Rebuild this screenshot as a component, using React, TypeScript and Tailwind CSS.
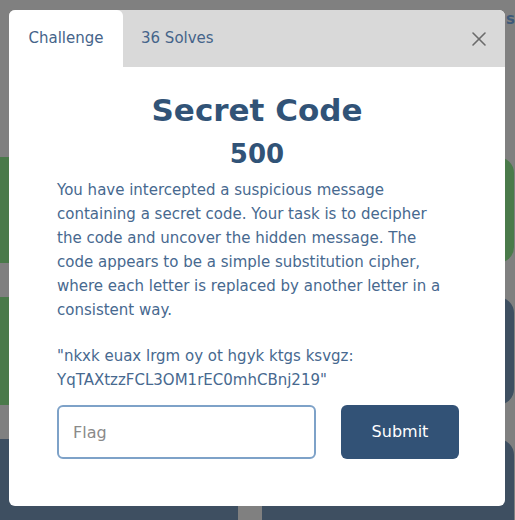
import { X } from 'lucide-react';

const FONT = { fontFamily: '"DejaVu Sans", "Open Sans", sans-serif' };

export default function App() {
  return (
    <div className="relative w-[515px] h-[520px] overflow-hidden bg-[#808080]" style={FONT}>
      {/* dimmed page behind the dialog */}
      <div className="flex flex-col gap-[34px] pt-[157px]">
        <div className="flex gap-[24px] -ml-[14px]">
          <div className="h-[106px] w-[252px] rounded-[16px] bg-[#4a7a4a]" />
          <div className="h-[106px] w-[252px] rounded-[16px] bg-[#4a7a4a]" />
        </div>
        <div className="flex gap-[24px] -ml-[14px]">
          <div className="h-[108px] w-[252px] rounded-[16px] bg-[#4a7a4a]" />
          <div className="h-[108px] w-[252px] rounded-[16px] bg-[#3e4f61]" />
        </div>
        <div className="flex gap-[24px] -ml-[14px]">
          <div className="flex h-[106px] w-[252px] items-end justify-center rounded-[16px] bg-[#3e4f61] text-[15px] leading-[18px] text-[#8a8f96]">
            <span className="-mb-[4px]">500</span>
          </div>
          <div className="flex h-[106px] w-[252px] items-end justify-center rounded-[16px] bg-[#3e4f61] text-[15px] leading-[18px] text-[#8a8f96]">
            <span className="-mb-[4px]">500</span>
          </div>
        </div>
      </div>
      <div className="absolute right-0 top-[8px] text-[15px] font-bold text-[#3e5a7a]">s</div>

      {/* dialog */}
      <div className="absolute left-[9px] top-[10px] w-[496px] h-[496px] overflow-hidden rounded-[6px] bg-white">
        <div className="flex h-[57px] items-stretch bg-[#d9d9d9]">
          <div className="flex w-[114px] items-center justify-center rounded-tl-[6px] rounded-tr-[6px] bg-white text-[15px] text-[#45648a]">
            Challenge
          </div>
          <div className="flex items-center px-[18px] text-[15px] text-[#45648a]">36 Solves</div>
          <div className="ml-auto flex items-center pr-[14px]">
            <X className="h-[24px] w-[24px] text-[#6b6b6b]" strokeWidth={1.6} />
          </div>
        </div>
        <div className="px-[48px] pt-[23px]">
          <h2 className="text-center text-[31px] font-bold leading-[40px] text-[#315377]">Secret Code</h2>
          <div className="mt-[8px] text-center text-[26px] font-bold leading-[32px] text-[#315377]">500</div>
          <p className="mt-[8px] text-[15px] leading-[24px] text-[#47698f]">
            You have intercepted a suspicious message
            <br />
            containing a secret code. Your task is to decipher
            <br />
            the code and uncover the hidden message. The
            <br />
            code appears to be a simple substitution cipher,
            <br />
            where each letter is replaced by another letter in a
            <br />
            consistent way.
          </p>
          <p className="mt-[22px] text-[15px] leading-[24px] text-[#47698f]">
            "nkxk euax lrgm oy ot hgyk ktgs ksvgz:
            <br />
            YqTAXtzzFCL3OM1rEC0mhCBnj219"
          </p>
          <div className="mt-[13px] flex gap-[25px]">
            <input
              placeholder="Flag"
              className="h-[54px] w-[259px] shrink-0 rounded-[6px] border-2 border-[#7ea2c8] px-[14px] text-[16px] text-[#333] placeholder-[#8a8a8a] outline-none"
            />
            <button className="h-[54px] w-[118px] shrink-0 rounded-[6px] bg-[#325276] text-[16px] text-white">
              Submit
            </button>
          </div>
        </div>
      </div>
    </div>
  );
}
